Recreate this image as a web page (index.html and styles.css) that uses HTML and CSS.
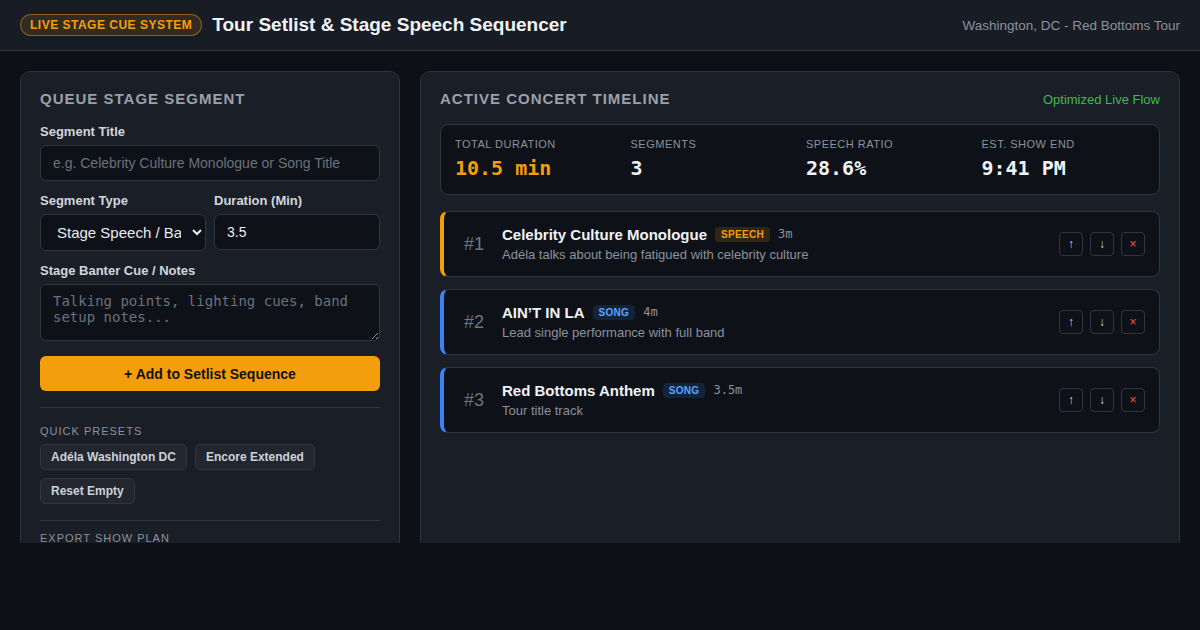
FILE: index.html
```html
<!DOCTYPE html>
<html lang="en">
    <head>
        <meta charset="UTF-8" />
        <meta name="viewport" content="width=device-width, initial-scale=1.0" />
        <title>Tour Setlist &amp; Stage Speech Sequencer</title>
        <link rel="stylesheet" href="styles.css">
    </head>
    <body>
        <header class="topBar">
            <div class="topBarLeft">
                <span class="liveBadge">LIVE STAGE CUE SYSTEM</span>
                <h1 class="appTitle">Tour Setlist &amp; Stage Speech Sequencer</h1>
            </div>
            <div class="tourName">Washington, DC - Red Bottoms Tour</div>
        </header>

        <main class="layout">
            <!-- Form Panel -->
            <section class="panel">
                <h2 class="panelTitle">Queue Stage Segment</h2>

                <div class="field">
                    <label class="fieldLabel" for="segTitle">Segment Title</label>
                    <input id="segTitle" class="textInput" type="text" placeholder="e.g. Celebrity Culture Monologue or Song Title" />
                </div>

                <div class="fieldRow">
                    <div class="field">
                        <label class="fieldLabel" for="segType">Segment Type</label>
                        <select id="segType" class="textInput selectInput">
                            <option>Stage Speech / Banter</option>
                            <option>Song Performance</option>
                        </select>
                    </div>
                    <div class="field">
                        <label class="fieldLabel" for="segDuration">Duration (Min)</label>
                        <input id="segDuration" class="textInput" type="text" value="3.5" />
                    </div>
                </div>

                <div class="field">
                    <label class="fieldLabel" for="segNotes">Stage Banter Cue / Notes</label>
                    <textarea id="segNotes" class="textInput notesInput" placeholder="Talking points, lighting cues, band setup notes..."></textarea>
                </div>

                <button class="addButton">+ Add to Setlist Sequence</button>

                <div class="divider"></div>

                <div class="smallHeading">Quick Presets</div>
                <div class="presetList">
                    <button class="presetButton">Adéla Washington DC</button>
                    <button class="presetButton">Encore Extended</button>
                    <button class="presetButton">Reset Empty</button>
                </div>

                <div class="divider tight"></div>

                <div class="smallHeading">Export Show Plan</div>
            </section>

            <!-- Timeline Panel -->
            <section class="panel">
                <div class="panelHeader">
                    <h2 class="panelTitle">Active Concert Timeline</h2>
                    <span class="flowStatus">Optimized Live Flow</span>
                </div>

                <div class="statsBox">
                    <div class="stat">
                        <div class="statLabel">Total Duration</div>
                        <div class="statValue accent">10.5 min</div>
                    </div>
                    <div class="stat">
                        <div class="statLabel">Segments</div>
                        <div class="statValue">3</div>
                    </div>
                    <div class="stat">
                        <div class="statLabel">Speech Ratio</div>
                        <div class="statValue">28.6%</div>
                    </div>
                    <div class="stat">
                        <div class="statLabel">Est. Show End</div>
                        <div class="statValue">9:41 PM</div>
                    </div>
                </div>

                <div class="segmentList">
                    <div class="segmentCard speech">
                        <div class="segmentNumber">#1</div>
                        <div class="segmentBody">
                            <div class="segmentHead">
                                <span class="segmentName">Celebrity Culture Monologue</span>
                                <span class="typeTag speechTag">SPEECH</span>
                                <span class="segmentTime">3m</span>
                            </div>
                            <div class="segmentNote">Adéla talks about being fatigued with celebrity culture</div>
                        </div>
                        <div class="segmentActions">
                            <button class="iconButton">↑</button>
                            <button class="iconButton">↓</button>
                            <button class="iconButton removeButton">×</button>
                        </div>
                    </div>

                    <div class="segmentCard song">
                        <div class="segmentNumber">#2</div>
                        <div class="segmentBody">
                            <div class="segmentHead">
                                <span class="segmentName">AIN’T IN LA</span>
                                <span class="typeTag songTag">SONG</span>
                                <span class="segmentTime">4m</span>
                            </div>
                            <div class="segmentNote">Lead single performance with full band</div>
                        </div>
                        <div class="segmentActions">
                            <button class="iconButton">↑</button>
                            <button class="iconButton">↓</button>
                            <button class="iconButton removeButton">×</button>
                        </div>
                    </div>

                    <div class="segmentCard song">
                        <div class="segmentNumber">#3</div>
                        <div class="segmentBody">
                            <div class="segmentHead">
                                <span class="segmentName">Red Bottoms Anthem</span>
                                <span class="typeTag songTag">SONG</span>
                                <span class="segmentTime">3.5m</span>
                            </div>
                            <div class="segmentNote">Tour title track</div>
                        </div>
                        <div class="segmentActions">
                            <button class="iconButton">↑</button>
                            <button class="iconButton">↓</button>
                            <button class="iconButton removeButton">×</button>
                        </div>
                    </div>
                </div>
            </section>
        </main>
    </body>
</html>
```

FILE: styles.css
```css
* {
    box-sizing: border-box;
}

body {
    margin: 0;
    background: #0d1017;
    color: #e6edf3;
    font-family: 'Liberation Sans', Arial, sans-serif;
}

/* Header */
.topBar {
    height: 51px;
    display: flex;
    align-items: center;
    justify-content: space-between;
    padding: 0 20px;
    background: #181c25;
    border-bottom: 1px solid #30353f;
}
.topBarLeft {
    display: flex;
    align-items: center;
    gap: 10px;
}
.liveBadge {
    font-size: 12px;
    font-weight: bold;
    letter-spacing: 0.5px;
    color: #f59e0b;
    background: rgba(245, 158, 11, 0.12);
    border: 1px solid rgba(245, 158, 11, 0.45);
    border-radius: 999px;
    padding: 3px 9px;
}
.appTitle {
    margin: 0;
    font-size: 19px;
    color: #f0f3f6;
}
.tourName {
    font-size: 13.5px;
    color: #8b929c;
}

/* Layout */
.layout {
    display: grid;
    grid-template-columns: 380px 1fr;
    gap: 20px;
    padding: 20px 20px 0;
    height: 492px;
    overflow: hidden;
}
.panel {
    background: #1a1e27;
    border: 1px solid #2e333d;
    border-radius: 10px;
    padding: 18px 19px;
    min-height: 560px;
}
.panelHeader {
    display: flex;
    align-items: baseline;
    justify-content: space-between;
}
.panelTitle {
    margin: 0 0 17px;
    font-size: 15px;
    letter-spacing: 1px;
    text-transform: uppercase;
    color: #9aa0aa;
}
.flowStatus {
    font-size: 13px;
    color: #3fb950;
}

/* Form */
.field {
    display: flex;
    flex-direction: column;
    min-width: 0;
    margin-bottom: 12px;
}
.fieldRow {
    display: grid;
    grid-template-columns: 1fr 1fr;
    gap: 8px;
}
.fieldLabel {
    font-size: 13px;
    font-weight: bold;
    color: #d2d6dc;
    margin-bottom: 6px;
}
.textInput {
    width: 100%;
    height: 36px;
    background: #0e1118;
    border: 1px solid #30353f;
    border-radius: 6px;
    color: #e6edf3;
    font-family: 'Liberation Sans', Arial, sans-serif;
    font-size: 14px;
    padding: 0 12px;
}
.textInput::placeholder {
    color: #6b717b;
}
.selectInput {
    height: 37px;
    padding: 0 8px 0 12px;
    font-size: 15px;
}
.notesInput {
    height: 57px;
    padding: 8px 12px;
    font-family: 'DejaVu Sans Mono', monospace;
    font-size: 14px;
    resize: vertical;
}
.addButton {
    width: 100%;
    height: 35px;
    margin-top: 3px;
    border: none;
    border-radius: 6px;
    background: #f59e0b;
    color: #111;
    font-family: 'Liberation Sans', Arial, sans-serif;
    font-size: 14px;
    font-weight: bold;
}
.divider {
    border-top: 1px solid #30353f;
    margin: 16px 0 17px;
}
.divider.tight {
    margin-bottom: 11px;
}
.smallHeading {
    font-size: 11px;
    letter-spacing: 1px;
    text-transform: uppercase;
    color: #8b929c;
    margin-bottom: 7px;
}
.presetList {
    display: flex;
    flex-wrap: wrap;
    gap: 8px;
}
.presetButton {
    height: 26px;
    padding: 0 10px;
    background: #22262f;
    border: 1px solid #30353f;
    border-radius: 5px;
    color: #cdd2d9;
    font-family: 'Liberation Sans', Arial, sans-serif;
    font-size: 12px;
    font-weight: bold;
}

/* Stats */
.statsBox {
    display: grid;
    grid-template-columns: repeat(4, 1fr);
    gap: 12px;
    padding: 13px 14px 14px;
    background: #0e1118;
    border: 1px solid #30353f;
    border-radius: 8px;
    margin-bottom: 16px;
}
.statLabel {
    font-size: 11px;
    letter-spacing: 0.5px;
    text-transform: uppercase;
    color: #8b929c;
    margin-bottom: 6px;
}
.statValue {
    font-family: 'DejaVu Sans Mono', monospace;
    font-size: 20px;
    font-weight: bold;
    color: #f0f3f6;
}
.statValue.accent {
    color: #f59e0b;
}

/* Segment cards */
.segmentList {
    display: flex;
    flex-direction: column;
    gap: 12px;
}
.segmentCard {
    display: flex;
    align-items: center;
    gap: 12px;
    padding: 12px 14px;
    background: #0e1118;
    border: 1px solid #30353f;
    border-left: 4px solid #3b82f6;
    border-radius: 8px;
}
.segmentCard.speech {
    border-left-color: #f59e0b;
}
.segmentNumber {
    width: 32px;
    text-align: center;
    font-size: 18px;
    color: #6e757f;
}
.segmentBody {
    flex: 1;
}
.segmentHead {
    display: flex;
    align-items: center;
    gap: 8px;
    height: 20px;
    margin-bottom: 2px;
}
.segmentName {
    font-size: 15px;
    font-weight: bold;
    color: #f0f3f6;
}
.typeTag {
    font-size: 10px;
    font-weight: bold;
    padding: 2px 6px;
    border-radius: 4px;
    letter-spacing: 0.3px;
}
.speechTag {
    color: #f59e0b;
    background: rgba(245, 158, 11, 0.15);
}
.songTag {
    color: #58a6ff;
    background: rgba(56, 139, 253, 0.15);
}
.segmentTime {
    font-family: 'DejaVu Sans Mono', monospace;
    font-size: 12px;
    color: #8b929c;
}
.segmentNote {
    font-size: 13px;
    line-height: 18px;
    color: #8b929c;
}
.segmentActions {
    display: flex;
    gap: 7px;
}
.iconButton {
    width: 24px;
    height: 24px;
    padding: 0;
    background: transparent;
    border: 1px solid #30353f;
    border-radius: 4px;
    color: #c9d1d9;
    font-size: 12px;
    line-height: 22px;
}
.removeButton {
    color: #f85149;
}
```
